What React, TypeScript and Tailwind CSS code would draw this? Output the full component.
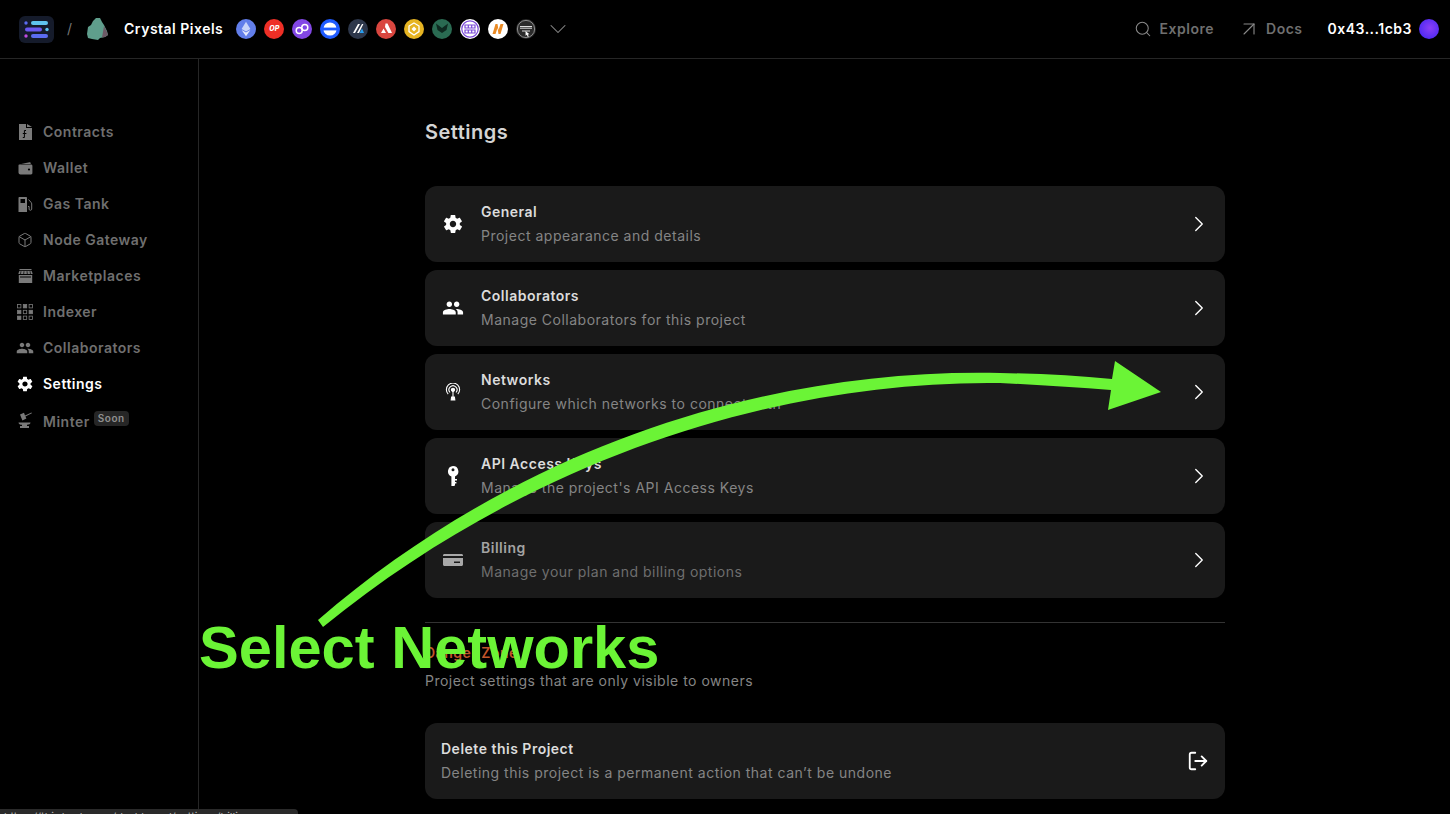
import type { ReactNode } from "react";
import { ArrowUpRight, Box, ChevronDown, ChevronRight, LogOut, Search } from "lucide-react";
import { IoMdSettings } from "react-icons/io";
import { MdPeople } from "react-icons/md";

const inter = "font-['Inter',sans-serif]";

function DocIcon() {
  return (
    <svg width="13" height="16" viewBox="0 0 13 16" fill="currentColor">
      <path d="M0 0h7v4h6v12H0zM8 0l5 3H8z" />
      <path d="M7 6.5H5.4v7H3.8M3.8 9.5h3.6" stroke="#000" strokeWidth="1" fill="none" />
    </svg>
  );
}

function WalletIcon() {
  return (
    <svg width="15" height="13" viewBox="0 0 15 13" fill="currentColor">
      <path d="M2 2.2 11.5.3c.6-.1 1.2.3 1.2 1V2H2z" />
      <path d="M1.5 2.5H13c.8 0 1.4.6 1.4 1.4v7.2c0 .8-.6 1.4-1.4 1.4H2.5c-1 0-2-.9-2-2V3.5c0-.6.4-1 1-1z" />
      <circle cx="11" cy="7.5" r="1.1" fill="#000" />
    </svg>
  );
}

function PumpIcon() {
  return (
    <svg width="15" height="15" viewBox="0 0 15 15" fill="currentColor">
      <path fillRule="evenodd" d="M1.5 0H8c.6 0 1 .4 1 1v14H.5V1c0-.6.4-1 1-1zM2.5 2v4h4.5V2z" />
      <path d="M10.5 2.5 13 5.3c.5.5.7 1 .7 1.7v5.2c0 1.4-2.6 1.4-2.6 0V9.5H10" fill="none" stroke="currentColor" strokeWidth="1" />
    </svg>
  );
}

function StoreIcon() {
  return (
    <svg width="15" height="14" viewBox="0 0 15 14" fill="currentColor">
      <path d="M1.5 0h12v1.2h-12z" />
      <path d="M1.3 2h12.4l1 3H.3z" />
      <path d="M3 2.2 2.5 5M6 2.2 5.7 5M9 2.2 9.3 5M12 2.2 12.5 5" stroke="#000" strokeWidth=".7" />
      <path d="M.8 6h13.4v8H.8z" />
      <path d="M2 8h11" stroke="#000" strokeWidth="1" />
    </svg>
  );
}

function GridIcon() {
  const filled = [0, 1, 0, 1, 0, 1, 1, 0, 0];
  return (
    <svg width="16" height="16" viewBox="0 0 16 16" fill="currentColor">
      {filled.map((f, i) => (
        <rect
          key={i}
          x={0.5 + (i % 3) * 5.8}
          y={0.5 + Math.floor(i / 3) * 5.8}
          width="3.4"
          height="3.4"
          fill={f ? "currentColor" : "none"}
          stroke="currentColor"
          strokeWidth=".8"
        />
      ))}
    </svg>
  );
}

function AnvilIcon() {
  return (
    <svg width="16" height="16" viewBox="0 0 16 16" fill="currentColor">
      <path d="M3 2.5 7 .8l1 2.6 6.5-3 .4.8-6.5 3.2 1 2.2-4 1.8z" />
      <path d="M1.5 10.5h12c0 1.5-1.5 2.2-3.5 2.3v1.2h2V16H3v-2h2v-1.2c-2 0-3.5-.8-3.5-2.3z" />
    </svg>
  );
}

function AntennaIcon() {
  return (
    <svg width="16" height="18" viewBox="0 0 16 18" fill="none" stroke="currentColor" strokeWidth="1.1">
      <path d="M3.2 11.2a6.6 6.6 0 1 1 9.6 0" />
      <path d="M5 9.5a4 4 0 1 1 6 0" />
      <circle cx="8" cy="6.8" r="1.6" fill="currentColor" />
      <path d="M8 8v6M6.6 14h2.8l.4 3H6.2z" fill="currentColor" />
    </svg>
  );
}

function KeyIcon() {
  return (
    <svg width="12" height="20" viewBox="0 0 12 20" fill="currentColor">
      <path
        fillRule="evenodd"
        d="M6 0a5.4 5.4 0 0 1 2 10.4V13H10v1.6H8V16h1.4v1.6H8V19.4L6.8 20H4.4V10.4A5.4 5.4 0 0 1 6 0zM6 2.2a1.5 1.5 0 1 0 0 3 1.5 1.5 0 0 0 0-3z"
      />
    </svg>
  );
}

function CardIcon() {
  return (
    <svg width="20" height="12" viewBox="0 0 20 12" fill="currentColor">
      <path d="M1.5 0h17c.8 0 1.5.6 1.5 1.4V2H0v-.6C0 .6.7 0 1.5 0z" />
      <path fillRule="evenodd" d="M0 4h20v6.5c0 .8-.7 1.5-1.5 1.5h-17C.7 12 0 11.3 0 10.5zM11 7.6v1.4h6V7.6z" />
    </svg>
  );
}

function Chain({ bg, children }: { bg: string; children?: ReactNode }) {
  return (
    <svg width="20" height="20" viewBox="0 0 20 20" className="shrink-0">
      <circle cx="10" cy="10" r="10" fill={bg} />
      {children}
    </svg>
  );
}

function ChainRow() {
  return (
    <div className="ml-[13px] flex items-center gap-2">
      <Chain bg="#627eea">
        <path d="M10 2.8 5.6 10 10 12.6 14.4 10z" fill="#c9d4fa" />
        <path d="M5.6 10.9 10 17.2l4.4-6.3L10 13.5z" fill="#e6ebfd" />
      </Chain>
      <div className={`flex h-5 w-5 shrink-0 items-center justify-center rounded-full bg-[#ee2f26] text-[7px] font-extrabold italic text-white ${inter}`}>
        OP
      </div>
      <Chain bg="#8247e5">
        <circle cx="7.2" cy="11.6" r="3" fill="none" stroke="#fff" strokeWidth="1.5" />
        <circle cx="12.8" cy="8.4" r="3" fill="none" stroke="#fff" strokeWidth="1.5" />
      </Chain>
      <Chain bg="#1f5bff">
        <circle cx="10" cy="10" r="6.6" fill="#fff" />
        <rect x="2" y="8.6" width="16" height="2.8" fill="#1f5bff" />
      </Chain>
      <Chain bg="#2d374b">
        <path d="M5 14 10 5h2L7 14zM9 14l5-9h1.4L11 14z" fill="#fff" />
        <path d="M11.5 14 14 9.5 16 14z" fill="#28a0f0" />
      </Chain>
      <Chain bg="#d9463f">
        <path d="M9.5 4.5h2L16 14h-3.6L9 8zM5 14l2.6-4.5L10 14z" fill="#fff" />
      </Chain>
      <Chain bg="#e6b422">
        <path d="M10 4 15 7v5.6L10 16l-5-3.4V7z" fill="none" stroke="#fff" strokeWidth="1.3" />
        <path d="M10 7.5 12.5 10 10 12.5 7.5 10z" fill="#fff" />
      </Chain>
      <Chain bg="#2a6b52">
        <path d="M4 4.5 10 9l6-4.5-1.5 6.5L10 14l-4.5-3z" fill="#0e2a20" />
      </Chain>
      <Chain bg="#fff">
        <circle cx="10" cy="10" r="8.2" fill="none" stroke="#7b4ad8" strokeWidth="1.2" />
        <path d="M5 6h10v3H5zM5 11h10v3H5z" fill="none" stroke="#7b4ad8" strokeWidth="1.2" />
        <path d="M8.3 6v3M11.7 6v3M8.3 11v3M11.7 11v3" stroke="#7b4ad8" strokeWidth="1.2" />
      </Chain>
      <Chain bg="#fff">
        <path d="M4.5 15 7.5 5h2l1 6 2-6h3l-3 10h-2l-1-6-2 6z" fill="#ea8a24" />
      </Chain>
      <Chain bg="#2b2b2b">
        <circle cx="10" cy="10" r="8.6" fill="none" stroke="#8a8a8a" strokeWidth="1" />
        <path d="M4 7.5h12M4 9.2h12M6 12h8" stroke="#ddd" strokeWidth="1" />
        <path d="M9.5 12l4 3.2-1.7.2 1 2.2-1 .4-1-2.2-1.2 1z" fill="#fff" />
      </Chain>
      <ChevronDown size={28} strokeWidth={0.9} className="text-[#8f8f8f]" />
    </div>
  );
}

function Header() {
  return (
    <header className="flex h-[59px] shrink-0 items-center justify-between border-b border-[#262626] pl-[19px] pr-[11px]">
      <div className="flex items-center">
        <svg width="35" height="27" viewBox="0 0 35 27">
          <rect width="35" height="27" rx="6" fill="#151b2b" />
          <circle cx="7" cy="7" r="1.7" fill="#5b6cf0" />
          <rect x="12" y="5" width="17" height="4" rx="2" fill="#5fc3ee" />
          <rect x="6" y="11.5" width="17" height="4" rx="2" fill="#6a58f0" />
          <circle cx="28" cy="13.5" r="1.7" fill="#5fc3ee" />
          <circle cx="7" cy="20" r="1.7" fill="#c04be0" />
          <rect x="12" y="18" width="17" height="4" rx="2" fill="#5b6cf0" />
        </svg>
        <span className={`ml-[13px] text-sm text-[#777] ${inter}`}>/</span>
        <svg width="22" height="22" viewBox="0 0 22 22" className="ml-[15px]">
          <path d="M9 0h4l2 4 2 3 3 6 1 4-3 2-5 1-2 2-6-1-4-1-1-4 1-7 3-2 2-4z" fill="#5f9e8c" />
          <path d="M17 8l3 6 1 3-3 2-3 .5z" fill="#6d5a66" />
        </svg>
        <span className={`ml-[15px] text-sm font-semibold tracking-[0.5px] text-white ${inter}`}>Crystal Pixels</span>
        <ChainRow />
      </div>
      <div className={`flex items-center text-sm font-semibold tracking-[0.5px] ${inter}`}>
        <Search size={18} strokeWidth={1.4} className="text-[#8a8a8a]" />
        <span className="ml-[8px] text-[#6f6f6f]">Explore</span>
        <ArrowUpRight size={24} strokeWidth={1.1} className="ml-[23px] text-[#8a8a8a]" />
        <span className="ml-[5px] text-[#6f6f6f]">Docs</span>
        <span className="ml-[25px] text-white">0x43...1cb3</span>
        <div className="ml-[7px] h-5 w-5 rounded-full bg-[radial-gradient(circle_at_55%_45%,#8b3ff5,#3a22f0)]" />
      </div>
    </header>
  );
}

const navItems: { label: string; icon: ReactNode; active?: boolean; soon?: boolean }[] = [
  { label: "Contracts", icon: <DocIcon /> },
  { label: "Wallet", icon: <WalletIcon /> },
  { label: "Gas Tank", icon: <PumpIcon /> },
  { label: "Node Gateway", icon: <Box size={16} strokeWidth={1.5} /> },
  { label: "Marketplaces", icon: <StoreIcon /> },
  { label: "Indexer", icon: <GridIcon /> },
  { label: "Collaborators", icon: <MdPeople size={18} /> },
  { label: "Settings", icon: <IoMdSettings size={18} />, active: true },
  { label: "Minter", icon: <AnvilIcon />, soon: true },
];

function Sidebar() {
  return (
    <aside className={`flex w-[199px] shrink-0 flex-col gap-4 border-r border-[#262626] pt-[63px] ${inter}`}>
      {navItems.map((item) => (
        <div
          key={item.label}
          className={`flex h-5 items-center text-sm font-semibold tracking-[0.5px] ${item.active ? "text-white" : "text-[#6f6f6f]"}`}
        >
          <span className={`flex w-[43px] shrink-0 justify-center pl-[14px] pr-[7px] ${item.active ? "" : "text-[#7a7a7a]"}`}>{item.icon}</span>
          <span className={item.soon ? "mt-1" : ""}>{item.label}</span>
          {item.soon && (
            <span className="mb-1 ml-1 rounded-[4px] bg-[#262626] px-1 py-px text-[10px] leading-[13px] tracking-[0.5px] text-[#8f8f8f]">
              Soon
            </span>
          )}
        </div>
      ))}
    </aside>
  );
}

const rows: { title: string; desc: string; icon: ReactNode; dim?: boolean }[] = [
  { title: "General", desc: "Project appearance and details", icon: <IoMdSettings size={22} /> },
  { title: "Collaborators", desc: "Manage Collaborators for this project", icon: <MdPeople size={22} /> },
  { title: "Networks", desc: "Configure which networks to connect with", icon: <AntennaIcon /> },
  { title: "API Access Keys", desc: "Manage the project's API Access Keys", icon: <KeyIcon /> },
  { title: "Billing", desc: "Manage your plan and billing options", icon: <CardIcon />, dim: true },
];

function SettingsRow({ title, desc, icon, dim }: (typeof rows)[number]) {
  return (
    <div className="flex h-[76px] items-center rounded-xl bg-[#1a1a1a] pr-[13px]">
      <div className={`flex w-[56px] shrink-0 justify-center ${dim ? "text-[#a8a8a8]" : "text-white"}`}>{icon}</div>
      <div className="flex grow flex-col gap-1">
        <span className={`text-sm font-semibold leading-5 tracking-[0.5px] ${dim ? "text-[#a3a3a3]" : "text-[#dcdcdc]"}`}>{title}</span>
        <span className={`text-sm leading-5 tracking-[0.5px] ${dim ? "text-[#6e6e6e]" : "text-[#858585]"}`}>{desc}</span>
      </div>
      <ChevronRight size={26} strokeWidth={1.25} className="text-white" />
    </div>
  );
}

function Overlay() {
  return (
    <>
      <svg width="1450" height="814" viewBox="0 0 1450 814" className="pointer-events-none absolute left-0 top-0">
        <path
          d="M318 620C520 445 770 368 1000 373Q1060 374 1112 379L1115 361 1161 392 1108 410 1111 390Q1060 386 1000 383C780 380 530 458 323 627Z"
          fill="#6bf436"
        />
      </svg>
      <span className="absolute left-[199px] top-[613px] font-['Liberation_Sans',sans-serif] text-[59.6px] font-bold leading-[70px] text-[#6bf436]">
        Select Networks
      </span>
      <div className={`absolute bottom-0 left-0 h-[5px] w-[298px] overflow-hidden rounded-tr bg-[#2a2a2a] pl-[4px] text-[11px] leading-4 text-[#b5b5b5] ${inter}`}>
        https://thirdweb.com/dashboard/settings/billing
      </div>
    </>
  );
}

export default function App() {
  return (
    <div className={`relative flex h-screen flex-col overflow-hidden bg-black ${inter}`}>
      <Header />
      <div className="flex grow">
        <Sidebar />
        <main className="grow pl-px">
          <div className="mx-auto w-[800px] pt-[59px]">
            <h1 className="text-xl font-semibold leading-7 tracking-[0.5px] text-[#d4d4d4]">Settings</h1>
            <div className="mt-[40px] flex flex-col gap-2">
              {rows.map((r) => (
                <SettingsRow key={r.title} {...r} />
              ))}
            </div>
            <div className="mt-6 border-t border-[#333]" />
            <h2 className="mt-[20px] text-sm font-semibold leading-5 tracking-[0.5px] text-[#c2552a]">Danger Zone</h2>
            <p className="mt-2 text-sm leading-5 tracking-[0.5px] text-[#858585]">Project settings that are only visible to owners</p>
            <div className="mt-[32px] flex h-[76px] items-center justify-between rounded-xl bg-[#1a1a1a] pl-4 pr-[16px]">
              <div className="flex flex-col gap-1">
                <span className="text-sm font-semibold leading-5 tracking-[0.5px] text-[#dcdcdc]">Delete this Project</span>
                <span className="text-sm leading-5 tracking-[0.5px] text-[#858585]">Deleting this project is a permanent action that can’t be undone</span>
              </div>
              <LogOut size={22} strokeWidth={2} className="text-white" />
            </div>
          </div>
        </main>
      </div>
      <Overlay />
    </div>
  );
}
